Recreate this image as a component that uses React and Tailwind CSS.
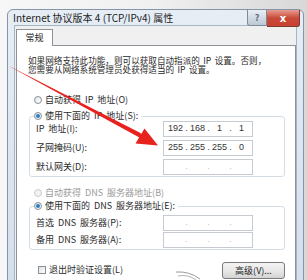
const cjk = { fontFamily: '"Noto Sans CJK SC", "Noto Sans", sans-serif' };

function Radio({ checked, disabled }) {
  return (
    <span
      className={`relative inline-flex w-[8px] h-[8px] rounded-full border shrink-0 items-center justify-center ${
        disabled ? 'border-[#c9ccd0] bg-[#f2f2f2]' : 'border-[#8a8f96] bg-gradient-to-br from-[#e2e5e8] to-[#ffffff]'
      }`}
    >
      {checked && <span className="w-[4px] h-[4px] rounded-full bg-[#2a7fc4]" />}
    </span>
  );
}

function IPBox({ values }) {
  const v = values || ['', '', '', ''];
  return (
    <div
      className="ml-auto mr-[31px] w-[90px] h-[16px] border border-[#c6cbd1] bg-white flex items-center pl-[2px] text-[9px] text-[#333]"
      style={{ fontFamily: '"Liberation Sans", Arial, sans-serif' }}
    >
      {[0, 1, 2, 3].map((i) => (
        <div key={i} className="flex items-center">
          {i > 0 && <span className={`w-[3px] text-center ${v[i] ? 'text-[#444]' : 'text-[#bbb]'}`}>.</span>}
          <span className="w-[19px] text-center">{v[i]}</span>
        </div>
      ))}
    </div>
  );
}

function Row({ label, values }) {
  return (
    <div className="flex items-center h-[17px] pl-[6px]">
      <span className="text-[9px] text-[#2a2a2a] [word-spacing:2px]">{label}</span>
      <IPBox values={values} />
    </div>
  );
}

export default function App() {
  return (
    <div className="relative w-[307px] h-[280px] overflow-hidden bg-gradient-to-r from-[#f7f7f7] via-[#f0f0f0] to-[#d8d8d8]" style={cjk}>
      <div className="pt-[9px] pl-[7px]">
        <div className="w-[297px] h-[280px] rounded-t-[6px] border border-[#8594a8] bg-gradient-to-b from-[#e6edf5] to-[#d3dfec] flex flex-col">
          {/* title bar */}
          <div className="relative h-[20px] flex items-center pl-[5px]">
            <span className="text-[10px] text-[#1e1e1e]">Internet 协议版本 4 (TCP/IPv4) 属性</span>
            <div className="absolute right-[3px] top-0 flex">
              <div className="w-[20px] h-[16px] rounded-bl-[3px] border border-t-0 border-[#7d8a99] bg-gradient-to-b from-[#e9eef4] to-[#bcc8d6] flex items-center justify-center text-[9px] text-[#5a6675] font-bold">?</div>
              <div className="w-[33px] h-[17px] rounded-br-[3px] border border-t-0 border-l-0 border-[#7a3b33] bg-gradient-to-b from-[#e59b8f] via-[#c94a3a] to-[#c84030] flex items-center justify-center text-[10px] text-white font-bold" style={{ fontFamily: '"DejaVu Sans", sans-serif' }}>x</div>
            </div>
          </div>
          {/* client */}
          <div className="mx-[6px] flex-1 bg-[#f0f0f0] border border-[#a7b4c2] pl-[1px] pt-[3px]">
            <div className="relative z-10 w-[37px] h-[17px] -mb-[1px] bg-white border border-b-0 border-[#8e939b] flex items-center justify-center text-[9px] text-[#222]">
              常规
            </div>
            <div className="h-[260px] bg-white border border-[#8e939b]">
              <div className="pt-[10px] pl-[11px] text-[8.6px] leading-[9px] text-[#2a2a2a] [word-spacing:1.5px] whitespace-nowrap">
                <div className="h-[9px]">如果网络支持此功能，则可以获取自动指派的 IP 设置。否则，</div>
                <div className="h-[9px]">您需要从网络系统管理员处获得适当的 IP 设置。</div>
              </div>
              <div className="mt-[20px] pl-[17px] flex items-center h-[12px] gap-[3px] text-[9px] text-[#2a2a2a] [word-spacing:2px]">
                <Radio />
                <span>自动获得 IP 地址(O)</span>
              </div>
              {/* group 1 */}
              <div className="mt-[10px] ml-[12px] w-[256px] h-[61px] border border-[#d5dde4] rounded-[3px]">
                <div className="-mt-[7px] ml-[4px] w-fit pr-[3px] bg-white flex items-center h-[12px] gap-[3px] text-[9px] text-[#2a2a2a] [word-spacing:2px]">
                  <Radio checked />
                  <span>使用下面的 IP 地址(S):</span>
                </div>
                <div className="-mt-[2px] flex flex-col gap-[2px]">
                  <Row label="IP 地址(I):" values={['192', '168', '1', '1']} />
                  <Row label="子网掩码(U):" values={['255', '255', '255', '0']} />
                  <Row label="默认网关(D):" />
                </div>
              </div>
              <div className="mt-[10px] pl-[17px] flex items-center h-[12px] gap-[3px] text-[9px] text-[#9a9a9a] [word-spacing:2px]">
                <Radio disabled />
                <span>自动获得 DNS 服务器地址(B)</span>
              </div>
              {/* group 2 */}
              <div className="mt-[7px] ml-[12px] w-[256px] h-[44px] border border-[#d5dde4] rounded-[3px]">
                <div className="-mt-[7px] ml-[4px] w-fit pr-[3px] bg-white flex items-center h-[12px] gap-[3px] text-[9px] text-[#2a2a2a] [word-spacing:2px]">
                  <Radio checked />
                  <span>使用下面的 DNS 服务器地址(E):</span>
                </div>
                <div className="mt-[2px] flex flex-col">
                  <Row label="首选 DNS 服务器(P):" />
                  <Row label="备用 DNS 服务器(A):" />
                </div>
              </div>
              <div className="mt-[12px] flex items-start">
                <div className="pl-[21px] pt-[1px] flex items-center gap-[3px] text-[9px] text-[#2a2a2a]">
                  <span className="w-[8px] h-[8px] border border-[#8a8f96] bg-gradient-to-br from-[#dfe2e6] to-white" />
                  <span>退出时验证设置(L)</span>
                </div>
                <div className="ml-auto mr-[10px] w-[63px] h-[17px] rounded-[3px] border border-[#7a7a7a] bg-gradient-to-b from-[#f4f4f4] via-[#e8e8e8] to-[#d3d3d3] flex items-center justify-center text-[9px] text-[#222]">
                  高级(V)...
                </div>
              </div>
            </div>
          </div>
        </div>
      </div>
      {/* red annotation arrow */}
      <svg className="absolute left-0 top-0 pointer-events-none" width="307" height="280" viewBox="0 0 307 280">
        <polygon points="9,66 11.5,67.5 143,139.5 140.5,133" fill="#e8231e" />
        <polygon points="158,145.5 135.5,143.5 144.5,128.5" fill="#e8231e" />
        <path d="M176 272 Q189 271 200 279" stroke="#9a9a9a" strokeWidth="1" fill="none" />
        <path d="M178 276 Q188 274 196 280" stroke="#b0b0b0" strokeWidth="1" fill="none" />
      </svg>
    </div>
  );
}
